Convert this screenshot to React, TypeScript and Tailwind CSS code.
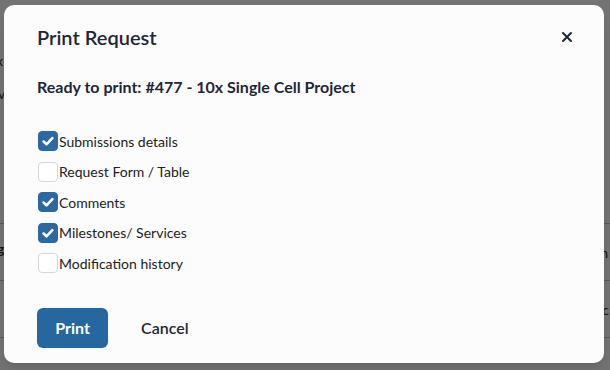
import React, { useState } from "react";

const items = [
  { label: "Submissions details", checked: true },
  { label: "Request Form / Table", checked: false },
  { label: "Comments", checked: true },
  { label: "Milestones/ Services", checked: true },
  { label: "Modification history", checked: false },
];

const Check = ({ on, onClick }: { on: boolean; onClick: () => void }) => (
  <button
    onClick={onClick}
    className={`ml-[1px] mr-[1px] w-[20px] h-[20px] rounded-[4px] flex items-center justify-center shrink-0 ${
      on ? "bg-[#2c68a2] border border-[#2c68a2]" : "bg-white border border-[#d4d7dc]"
    }`}
  >
    {on && (
      <svg width="14" height="14" viewBox="0 0 16 16" fill="none">
        <path d="M3 8.6l3.3 3.2L13 4.8" stroke="white" strokeWidth="3" strokeLinecap="round" strokeLinejoin="round" />
      </svg>
    )}
  </button>
);

const App = () => {
  const [state, setState] = useState(items.map((i) => i.checked));

  return (
    <div className="relative w-[610px] h-[370px] overflow-hidden bg-white font-['Lato',sans-serif]">
      {/* page behind the modal */}
      <div className="flex flex-col text-[14px] text-[#333]">
        <div className="h-[45px]" />
        <div className="h-[30px] flex items-center"><span className="-ml-[4px]">x</span></div>
        <div className="h-[36px] flex items-center"><span className="-ml-[2px]">v</span></div>
        <div className="h-[112px]" />
        <div className="h-[1px] bg-[#c8c8c8]" />
        <div className="h-[56px] flex items-center justify-between pr-[2px]">
          <span className="-ml-[3px] -mt-[8px] font-bold">g</span>
          <span>n</span>
        </div>
        <div className="h-[1px] bg-[#c8c8c8]" />
        <div className="h-[56px] flex items-center justify-end pr-[1px]">lc</div>
        <div className="h-[1px] bg-[#c8c8c8]" />
      </div>
      <div className="absolute inset-0 bg-black/55" />

      {/* modal */}
      <div className="absolute left-[4px] top-[5px] w-[600px] h-[358px] bg-[#fcfcfc] rounded-[10px] shadow-lg flex flex-col px-[33px] pt-[18px] text-[#1e2637]">
        <div className="flex items-center justify-between h-[28px]">
          <h2 className="text-[20px] font-semibold leading-[28px]">Print Request</h2>
          <button className="text-[#1e2637] mr-[-3px]">
            <svg width="14" height="14" viewBox="0 0 14 14">
              <path d="M3 3l8 8M11 3l-8 8" stroke="currentColor" strokeWidth="2" strokeLinecap="round" />
            </svg>
          </button>
        </div>
        <p className="mt-[24px] text-[16px] font-bold leading-[24px]">Ready to print: #477 - 10x Single Cell Project</p>
        <div className="mt-[27px] flex flex-col">
          {items.map((it, i) => (
            <label key={it.label} className="h-[30.5px] flex items-center text-[14px] text-[#222]">
              <Check on={state[i]} onClick={() => setState(state.map((v, j) => (j === i ? !v : v)))} />
              <span>{it.label}</span>
            </label>
          ))}
        </div>
        <div className="mt-[29px] flex items-center">
          <button className="w-[71px] h-[40px] rounded-[6px] bg-[#27679f] text-white text-[16px] font-bold">Print</button>
          <button className="ml-[33px] text-[16px] font-semibold text-[#1e2637]">Cancel</button>
        </div>
      </div>
    </div>
  );
};

export default App;
